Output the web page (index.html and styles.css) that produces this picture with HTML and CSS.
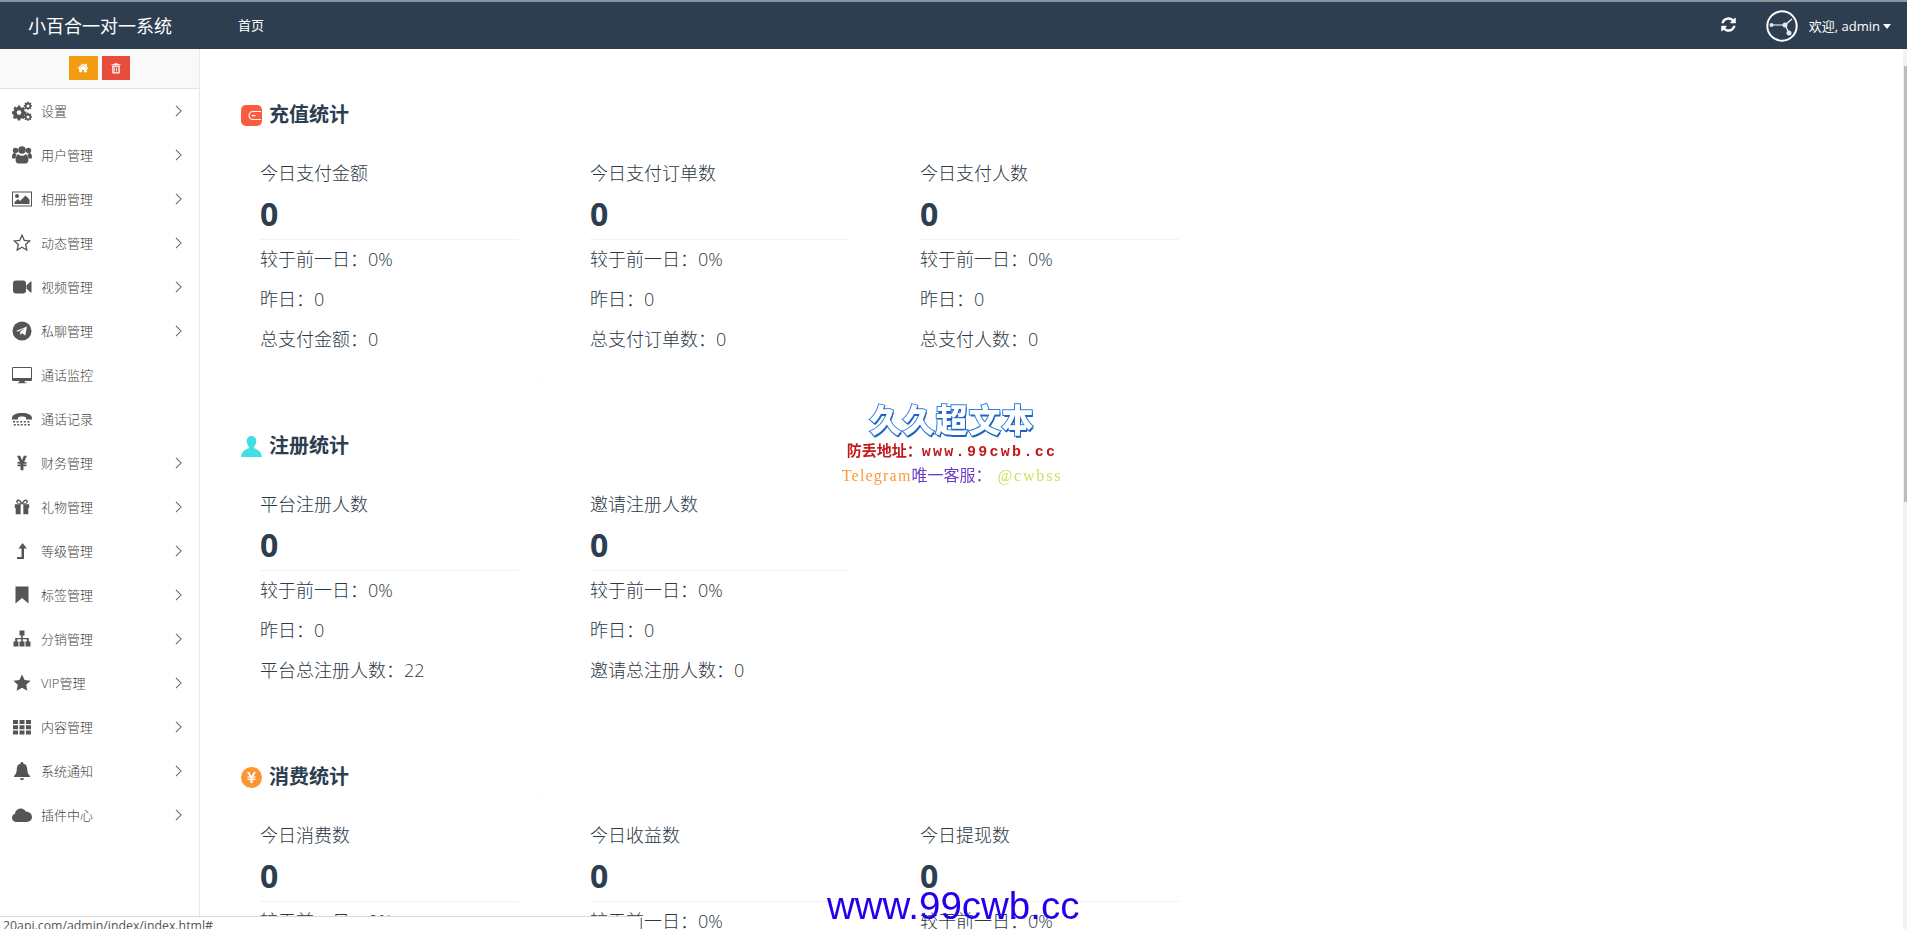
FILE: index.html
```html
<!DOCTYPE html>
<html lang="zh-CN">
<head>
  <meta charset="UTF-8" />
  <title>小百合一对一系统</title>
  <link rel="stylesheet" href="styles.css">
</head>
<body>
  <div class="topbar">
    <div class="brand">小百合一对一系统</div>
    <a class="top-link" href="#">首页</a>
    <div class="top-right">
      <svg class="refresh" viewBox="0 0 1792 1792"><path d="M1639 1056q0 5-1 7-64 268-268 434.500t-478 166.500q-146 0-282.500-55t-243.500-157l-129 129q-19 19-45 19t-45-19-19-45v-448q0-26 19-45t45-19h448q26 0 45 19t19 45-19 45l-137 137q71 66 161 102t187 36q134 0 250-65t186-179q11-17 53-117 8-23 30-23h192q13 0 22.500 9.500t9.500 22.500zm25-800v448q0 26-19 45t-45 19h-448q-26 0-45-19t-19-45 19-45l138-138q-148-137-349-137-134 0-250 65t-186 179q-11 17-53 117-8 23-30 23h-199q-13 0-22.500-9.500t-9.500-22.500v-7q65-268 270-434.500t480-166.500q146 0 284 55.500t245 156.500l130-129q19-19 45-19t45 19 19 45z"/></svg>
      <svg class="avatar" viewBox="0 0 32 32"><circle cx="16" cy="16" r="14.700" fill="none" stroke="#fff" stroke-width="2"/><path d="M5 15h14l4 8M19 15l7-6" fill="none" stroke="#fff" stroke-width="1.200"/><circle cx="5.500" cy="15" r="2" fill="#e6e9ec"/><circle cx="19" cy="15" r="2.500" fill="#e6e9ec"/><circle cx="23" cy="23" r="2.500" fill="#e6e9ec"/></svg>
      <span class="welcome">欢迎, admin</span>
      <span class="caret"></span>
    </div>
  </div>

  <div class="layout">
    <aside class="sidebar">
      <div class="side-tools">
        <span class="tool tool-home">
          <svg viewBox="0 0 1792 1792"><path d="M1472 992v480q0 26-19 45t-45 19h-384v-384h-256v384h-384q-26 0-45-19t-19-45v-480q0-1 .5-3t.5-3l575-474 575 474q1 2 1 6zm223-69l-62 74q-8 9-21 11h-3q-13 0-21-7l-692-577-692 577q-12 8-24 7-13-2-21-11l-62-74q-8-10-7-23.500t11-21.500l719-599q32-26 76-26t76 26l244 204v-195q0-14 9-23t23-9h192q14 0 23 9t9 23v408l219 182q10 8 11 21.500t-7 23.500z"/></svg>
        </span>
        <span class="tool tool-trash">
          <svg viewBox="0 0 16 16"><path d="M6 1.500h4l.6 1.500H14v1.300H2V3h3.400zM3 5h10v9a1.200 1.200 0 0 1-1.200 1.200H4.200A1.200 1.200 0 0 1 3 14zm1.800 1.400v7.400h6.400V6.400zm1 1h1v5.400h-1zm2.400 0h1v5.400h-1z"/></svg>
        </span>
      </div>
      <ul class="menu">
        <li class="menu-item">
          <svg class="mi" viewBox="0 0 20 20"><path fill-rule="evenodd" d="M5.800 4.500h2.400l.4 1.700 1.300.6 1.500-.9 1.700 1.700-.9 1.500.6 1.300 1.700.4v2.400l-1.700.4-.6 1.300.9 1.500-1.700 1.700-1.500-.9-1.300.6-.4 1.700H5.800l-.4-1.700-1.300-.6-1.500.9-1.700-1.700.9-1.500-.6-1.300L0 12.800v-2.400l1.700-.4.6-1.300-.9-1.500 1.700-1.700 1.500.9 1.300-.6zM7 9.300a2.300 2.300 0 1 0 0 4.600 2.300 2.300 0 0 0 0-4.600z"/><path fill-rule="evenodd" d="M15.500.5l1 0 .3 1.100.9.400 1-.5.7.8-.6 1 .3.800 1 .3v1.100l-1 .3-.4.800.6 1-.8.700-1-.6-.8.400-.3 1h-1l-.3-1-.9-.4-1 .6-.7-.8.500-1-.3-.8-1-.3V4.300l1-.3.400-.8-.6-1 .8-.7 1 .5.800-.4zM16 3.500a1.500 1.500 0 1 0 0 3 1.500 1.500 0 0 0 0-3z"/><path fill-rule="evenodd" d="M15.500 11.500h1l.3 1 .9.400 1-.5.7.8-.6 1 .3.800 1 .3v1.100l-1 .3-.4.800.6 1-.8.700-1-.6-.8.400-.3 1h-1l-.3-1-.9-.4-1 .6-.7-.8.500-1-.3-.8-1-.3v-1.100l1-.3.400-.8-.6-1 .8-.7 1 .5.800-.4zM16 14.500a1.500 1.500 0 1 0 0 3 1.500 1.500 0 0 0 0-3z"/></svg>
          <span class="mt">设置</span>
          <svg class="chev" viewBox="0 0 8 14"><path d="M1 1l6 6-6 6"/></svg>
        </li>
        <li class="menu-item">
          <svg class="mi" viewBox="0 0 20 20"><circle cx="3.500" cy="5.500" r="2.700"/><circle cx="16.500" cy="5.500" r="2.700"/><circle cx="10" cy="5" r="3.800"/><path d="M0 12.500c0-3 .8-4.500 2.500-4.500.8.800 1.500 1 2.300 1-.8 1-1.200 2.500-1.200 4.500H1.500c-1 0-1.500-.2-1.500-1zM20 12.500c0-3-.8-4.500-2.500-4.500-.8.800-1.500 1-2.300 1 .8 1 1.200 2.500 1.200 4.500h2.100c1 0 1.500-.2 1.500-1zM6.500 9.300c1 1 2.200 1.500 3.500 1.500s2.500-.5 3.500-1.500c1.800 0 2.900 2.400 2.900 6 0 2-1.100 3.200-2.800 3.200H6.400c-1.700 0-2.800-1.200-2.800-3.200 0-3.600 1.100-6 2.900-6z"/></svg>
          <span class="mt">用户管理</span>
          <svg class="chev" viewBox="0 0 8 14"><path d="M1 1l6 6-6 6"/></svg>
        </li>
        <li class="menu-item">
          <svg class="mi" viewBox="0 0 20 20"><path fill-rule="evenodd" d="M0 2.500h20v15H0zm1 1v13h18v-13z"/><circle cx="5" cy="7" r="2"/><path d="M2.500 15v-2l3.500-3 2 2 5.500-5.500 4 4V15z"/></svg>
          <span class="mt">相册管理</span>
          <svg class="chev" viewBox="0 0 8 14"><path d="M1 1l6 6-6 6"/></svg>
        </li>
        <li class="menu-item">
          <svg class="mi" viewBox="0 0 20 20"><path fill="none" stroke="#555" stroke-width="1.300" d="M10 2.300l2.300 5 5.400.6-4 3.700 1.100 5.400-4.800-2.700-4.800 2.700 1.100-5.400-4-3.700 5.400-.6z"/></svg>
          <span class="mt">动态管理</span>
          <svg class="chev" viewBox="0 0 8 14"><path d="M1 1l6 6-6 6"/></svg>
        </li>
        <li class="menu-item">
          <svg class="mi" viewBox="0 0 20 20"><rect x="1" y="3.500" width="13" height="13" rx="3"/><path d="M14.500 8.500l4-4h1v11h-1l-4-4z"/></svg>
          <span class="mt">视频管理</span>
          <svg class="chev" viewBox="0 0 8 14"><path d="M1 1l6 6-6 6"/></svg>
        </li>
        <li class="menu-item">
          <svg class="mi" viewBox="0 0 20 20"><circle cx="10" cy="10" r="9.500"/><path fill="#fff" d="M4 10l11-4.500-1.700 9-3.200-2.300-1.600 1.700-.4-3 4.500-4-6 3.500z"/></svg>
          <span class="mt">私聊管理</span>
          <svg class="chev" viewBox="0 0 8 14"><path d="M1 1l6 6-6 6"/></svg>
        </li>
        <li class="menu-item">
          <svg class="mi" viewBox="0 0 20 20"><path fill-rule="evenodd" d="M1.300 2h17.400c.7 0 1.300.6 1.300 1.300v11.400c0 .7-.6 1.300-1.300 1.300H12.500l.5 1.500h1.500v.7h-9v-.7H7l.5-1.500H1.300C.6 16 0 15.400 0 14.700V3.300C0 2.600.6 2 1.300 2zM1 3v10h18V3z"/></svg>
          <span class="mt">通话监控</span>
        </li>
        <li class="menu-item">
          <svg class="mi" viewBox="0 0 20 20"><path d="M0 9c0-3 4-5 10-5s10 2 10 5v1.500h-6v-2c-1-.7-2.500-1-4-1s-3 .3-4 1v2H0z"/><path d="M1 12h2v1.500H1zm3.500 0h2v1.500h-2zm3.700 0h2v1.500h-2zm3.600 0h2v1.500h-2zm3.700 0h2v1.500h-2zM1.800 15h2v1.500h-2zm3.500 0h2v1.500h-2zm3.500 0h2v1.500h-2zm3.500 0h2v1.500h-2zm3.500 0h2v1.500h-2z"/></svg>
          <span class="mt">通话记录</span>
        </li>
        <li class="menu-item">
          <svg class="mi mi-sm" viewBox="0 0 20 20"><path d="M4.500 2H8l2 5 2-5h3.500L12.400 9H15v1.700h-3.400v1.100H15v1.700h-3.400V18H8.400v-4.500H5v-1.700h3.400v-1.100H5V9h2.600z"/></svg>
          <span class="mt">财务管理</span>
          <svg class="chev" viewBox="0 0 8 14"><path d="M1 1l6 6-6 6"/></svg>
        </li>
        <li class="menu-item">
          <svg class="mi mi-sm" viewBox="0 0 20 20"><path fill-rule="evenodd" d="M2 7h5.500c-2.500-.3-4-1.500-4-3 0-1.300 1-2.200 2.300-2.200 1.800 0 3.300 1.500 4.200 3.500.9-2 2.400-3.500 4.200-3.500 1.300 0 2.300.9 2.300 2.200 0 1.500-1.500 2.700-4 3H18v4h-1v7H3v-7H2zM5.800 3.300c-.5 0-.8.300-.8.800 0 .9 1.300 1.900 3.600 1.900-.6-1.600-1.700-2.700-2.800-2.700zm8.400 0c-1.100 0-2.200 1.100-2.800 2.700 2.300 0 3.600-1 3.600-1.900 0-.5-.3-.8-.8-.8zM8.500 7v11h3V7z"/></svg>
          <span class="mt">礼物管理</span>
          <svg class="chev" viewBox="0 0 8 14"><path d="M1 1l6 6-6 6"/></svg>
        </li>
        <li class="menu-item">
          <svg class="mi" viewBox="0 0 20 20"><path d="M10.500 2l4.500 5.500h-3V18H5v-2h4.500V7.500h-3z"/></svg>
          <span class="mt">等级管理</span>
          <svg class="chev" viewBox="0 0 8 14"><path d="M1 1l6 6-6 6"/></svg>
        </li>
        <li class="menu-item">
          <svg class="mi" viewBox="0 0 20 20"><path d="M3.500 1.500h13v17L10 13l-6.500 5.500z"/></svg>
          <span class="mt">标签管理</span>
          <svg class="chev" viewBox="0 0 8 14"><path d="M1 1l6 6-6 6"/></svg>
        </li>
        <li class="menu-item">
          <svg class="mi" viewBox="0 0 20 20"><path d="M6.500 1.500h5v5H9.800V9h6v3.500h1.700v5h-5v-5h1.300v-2.200h-4v2.200h1.700v5h-5v-5h1.700v-2.200h-4v2.200h1.300v5h-5v-5h1.700V9h6V6.500H6.500z" transform="translate(1 0)"/></svg>
          <span class="mt">分销管理</span>
          <svg class="chev" viewBox="0 0 8 14"><path d="M1 1l6 6-6 6"/></svg>
        </li>
        <li class="menu-item">
          <svg class="mi" viewBox="0 0 20 20"><path d="M10 1.500l2.600 5.500 6 .7-4.400 4.100 1.200 6L10 14.800l-5.400 3 1.200-6-4.400-4.100 6-.7z"/></svg>
          <span class="mt">VIP管理</span>
          <svg class="chev" viewBox="0 0 8 14"><path d="M1 1l6 6-6 6"/></svg>
        </li>
        <li class="menu-item">
          <svg class="mi" viewBox="0 0 20 20"><path d="M1 3h5v4H1zm6.500 0h5v4h-5zm6.500 0h5v4h-5zM1 8.300h5v4H1zm6.500 0h5v4h-5zm6.500 0h5v4h-5zM1 13.600h5v4H1zm6.500 0h5v4h-5zm6.500 0h5v4h-5z"/></svg>
          <span class="mt">内容管理</span>
          <svg class="chev" viewBox="0 0 8 14"><path d="M1 1l6 6-6 6"/></svg>
        </li>
        <li class="menu-item">
          <svg class="mi" viewBox="0 0 20 20"><path d="M10 1a1.300 1.300 0 0 1 1.300 1.500c2.500.6 3.900 2.600 3.900 5.300 0 4 1.200 5.700 2.800 7.200v1H2v-1c1.600-1.500 2.800-3.200 2.800-7.200 0-2.700 1.400-4.700 3.900-5.300A1.300 1.300 0 0 1 10 1zM8 17.200h4a2 2 0 0 1-4 0z"/></svg>
          <span class="mt">系统通知</span>
          <svg class="chev" viewBox="0 0 8 14"><path d="M1 1l6 6-6 6"/></svg>
        </li>
        <li class="menu-item">
          <svg class="mi" viewBox="0 0 20 20"><path d="M4.500 17C2 17 0 15.200 0 12.800c0-1.900 1.200-3.500 3-4 .3-3 2.800-5.300 5.800-5.300 2.300 0 4.300 1.300 5.200 3.300 3.300-.3 6 2.200 6 5.300 0 2.800-2.200 4.900-5 4.900z"/></svg>
          <span class="mt">插件中心</span>
          <svg class="chev" viewBox="0 0 8 14"><path d="M1 1l6 6-6 6"/></svg>
        </li>
      </ul>
    </aside>

    <main class="content">
      <section class="stat-group">
        <h3 class="group-title">
          <svg class="gi" viewBox="0 0 21 21"><rect width="21" height="21" rx="5" fill="#fb5b3f"/><path d="M20 6.500h-8a4 4 0 0 0 0 8h8" fill="none" stroke="#fff" stroke-width="1.200"/><rect x="10.500" y="10" width="4" height="1.200" fill="#fff"/></svg>
          充值统计
        </h3>
        <div class="cards">
          <div class="card">
            <div class="card-name">今日支付金额</div>
            <div class="card-num">0</div>
            <div class="card-row">较于前一日：0%</div>
            <div class="card-row">昨日：0</div>
            <div class="card-row">总支付金额：0</div>
          </div>
          <div class="card">
            <div class="card-name">今日支付订单数</div>
            <div class="card-num">0</div>
            <div class="card-row">较于前一日：0%</div>
            <div class="card-row">昨日：0</div>
            <div class="card-row">总支付订单数：0</div>
          </div>
          <div class="card">
            <div class="card-name">今日支付人数</div>
            <div class="card-num">0</div>
            <div class="card-row">较于前一日：0%</div>
            <div class="card-row">昨日：0</div>
            <div class="card-row">总支付人数：0</div>
          </div>
        </div>
      </section>

      <section class="stat-group">
        <h3 class="group-title">
          <svg class="gi" viewBox="0 0 21 21"><path fill="#40dfe3" d="M10.500 0c3 0 4.800 2.200 4.800 5.200 0 2.200-.9 4-2.100 5.300v1.700c3.200 1.100 7 2.800 7.800 8.800H0c.8-6 4.600-7.700 7.800-8.800v-1.700C6.600 9.200 5.700 7.400 5.700 5.200 5.700 2.200 7.500 0 10.500 0z"/></svg>
          注册统计
        </h3>
        <div class="cards">
          <div class="card">
            <div class="card-name">平台注册人数</div>
            <div class="card-num">0</div>
            <div class="card-row">较于前一日：0%</div>
            <div class="card-row">昨日：0</div>
            <div class="card-row">平台总注册人数：22</div>
          </div>
          <div class="card">
            <div class="card-name">邀请注册人数</div>
            <div class="card-num">0</div>
            <div class="card-row">较于前一日：0%</div>
            <div class="card-row">昨日：0</div>
            <div class="card-row">邀请总注册人数：0</div>
          </div>
        </div>
      </section>

      <section class="stat-group">
        <h3 class="group-title">
          <svg class="gi" viewBox="0 0 21 21"><circle cx="10.500" cy="10.500" r="10.500" fill="#fb9630"/><path fill="#fff" d="M6 5h2.300l2.200 3.900L12.700 5H15l-2.600 4.500h2.100v1.200h-3v1h3v1.200h-3V16h-2v-3.100h-3v-1.200h3v-1h-3V9.500h2.100z"/></svg>
          消费统计
        </h3>
        <div class="cards">
          <div class="card">
            <div class="card-name">今日消费数</div>
            <div class="card-num">0</div>
            <div class="card-row">较于前一日：0%</div>
          </div>
          <div class="card">
            <div class="card-name">今日收益数</div>
            <div class="card-num">0</div>
            <div class="card-row">较于前一日：0%</div>
          </div>
          <div class="card">
            <div class="card-name">今日提现数</div>
            <div class="card-num">0</div>
            <div class="card-row">较于前一日：0%</div>
          </div>
        </div>
      </section>
    </main>

    <div class="scrollbar"><div class="scroll-thumb"></div></div>
  </div>

  <!-- watermark over the page -->
  <div class="stamp">
    <div class="stamp-logo">久久超文本</div>
    <div class="stamp-addr">防丢地址：<span class="addr-url">www.99cwb.cc</span></div>
    <div class="stamp-tg"><span class="tg-a">Telegram</span><span class="tg-b">唯一客服：</span><span class="tg-c">@cwbss</span></div>
  </div>
  <div class="big-url">www.99cwb.cc</div>
  <div class="status-bar">20api.com/admin/index/index.html#</div>
</body>
</html>
```

FILE: styles.css
```css
* {
  box-sizing: border-box;
}

html, body {
  height: 100%;
}

body {
  margin: 0;
  overflow: hidden;
  background: #fff;
  color: #2c3e50;
  font-family: "Open Sans", "Noto Sans CJK SC", sans-serif;
  display: flex;
  flex-direction: column;
}

/* top bar */
.topbar {
  height: 49px;
  flex: none;
  display: flex;
  align-items: center;
  background: #2c3e50;
  border-top: 2px solid #8a939c;
  color: #fff;
}

.brand {
  width: 238px;
  padding-left: 28px;
  margin-bottom: 2px;
  font-size: 18px;
  font-weight: 400;
  white-space: nowrap;
}

.top-link {
  margin-bottom: 2px;
  color: #fff;
  font-size: 13px;
  font-weight: 400;
  text-decoration: none;
}

.top-right {
  margin-left: auto;
  display: flex;
  align-items: center;
  padding-right: 16px;
}

.refresh {
  width: 17px;
  height: 17px;
  fill: #fff;
  margin-right: 29px;
  margin-bottom: 2px;
}

.avatar {
  width: 32px;
  height: 32px;
  margin-right: 11px;
}

.welcome {
  font-size: 13px;
}

.caret {
  margin: 2px 0 0 3px;
  border-top: 5px solid #fff;
  border-left: 4px solid transparent;
  border-right: 4px solid transparent;
}

.layout {
  flex: 1;
  display: flex;
  min-height: 0;
}

/* sidebar */
.sidebar {
  width: 200px;
  flex: none;
  border-right: 1px solid #e8e8e8;
  background: #fff;
}

.side-tools {
  height: 40px;
  display: flex;
  justify-content: center;
  align-items: flex-start;
  gap: 4px;
  padding-top: 7px;
  padding-right: 1px;
  background: #f9f9f9;
  border-bottom: 1px solid #e2e2e2;
}

.tool {
  height: 24px;
  display: flex;
  align-items: center;
  justify-content: center;
}

.tool svg {
  width: 12px;
  height: 12px;
  fill: #fff;
}

.tool-home {
  width: 29px;
  background: #f39c12;
}

.tool-trash {
  width: 28px;
  background: #e74c3c;
}

.menu {
  list-style: none;
  margin: 0;
  padding: 0;
}

.menu-item {
  height: 44px;
  display: flex;
  align-items: center;
  padding: 0 17px 0 12px;
  font-size: 13px;
  font-weight: 300;
  color: #444;
}

.mi {
  width: 20px;
  height: 20px;
  flex: none;
  fill: #555;
  margin-right: 9px;
}

.mi-sm {
  width: 18px;
  height: 18px;
  margin-left: 1px;
  margin-right: 10px;
}

.mt {
  flex: 1;
  margin-bottom: 2px;
}

.chev {
  width: 7px;
  height: 12px;
  fill: none;
  stroke: #666;
  stroke-width: 1.200;
}

/* stat cards */
.content {
  flex: 1;
  min-width: 0;
  overflow: hidden;
  padding: 51px 0 0 37px;
}

.stat-group {
  height: 331px;
}

.group-title {
  margin: 0 0 3px;
  height: 30px;
  display: flex;
  align-items: center;
  gap: 7px;
  padding-left: 4px;
  font-size: 20px;
  font-weight: 700;
  line-height: 30px;
  color: #2c3e50;
}

.gi {
  width: 21px;
  height: 21px;
  flex: none;
}

.cards {
  display: flex;
  gap: 25px;
}

.card {
  width: 305px;
  height: 250px;
  padding: 25px 23px 0;
  background: #fff;
  box-shadow: 0 0 4px rgba(0, 0, 0, 0.025);
}

.card-name {
  font-size: 18px;
  font-weight: 300;
  line-height: 30px;
  color: #2c3845;
}

.card-num {
  height: 52px;
  border-bottom: 1px solid #f2f2f2;
  font-family: "Open Sans", sans-serif;
  font-size: 32px;
  font-weight: 700;
  line-height: 52px;
  color: #2c3e50;
}

.card-row {
  height: 40px;
  font-size: 18px;
  font-weight: 300;
  line-height: 38px;
  color: #2c3845;
}

/* fake browser scrollbar */
.scrollbar {
  width: 4px;
  flex: none;
  background: #f3f3f3;
}

.scroll-thumb {
  height: 436px;
  margin-top: 17px;
  margin-left: 1px;
  background: #bdbdbd;
}

/* watermark */
.stamp {
  position: fixed;
  left: 832px;
  top: 396px;
  width: 240px;
  text-align: center;
}

.stamp-logo {
  font-family: "Noto Sans CJK SC", sans-serif;
  font-size: 32px;
  font-weight: 900;
  line-height: 44px;
  letter-spacing: 1px;
  color: #fff;
  -webkit-text-stroke: 2px #2f7fe0;
  paint-order: stroke fill;
  text-shadow: 1px 2px 0 #1c63c4;
}

.stamp-addr {
  margin-top: -1px;
  font-family: "Noto Sans CJK SC", sans-serif;
  font-size: 15px;
  font-weight: 700;
  line-height: 22px;
  color: #c01a1a;
  white-space: nowrap;
}

.addr-url {
  font-family: "Liberation Mono", monospace;
  letter-spacing: 2.300px;
}

.stamp-tg {
  font-family: "Liberation Serif", "Noto Sans CJK SC", serif;
  font-size: 16px;
  line-height: 24px;
  white-space: nowrap;
}

.tg-a {
  color: #ff9a3c;
  letter-spacing: 1.200px;
}

.tg-b {
  color: #6a3fc8;
  margin-right: 6px;
}

.tg-c {
  color: #cfe05a;
  letter-spacing: 1.800px;
}

.big-url {
  position: fixed;
  z-index: 2;
  left: 827px;
  top: 884px;
  font-family: "Liberation Sans", sans-serif;
  font-size: 38.500px;
  line-height: 44px;
  color: #2200ee;
  white-space: nowrap;
}

.status-bar {
  position: fixed;
  left: 0;
  bottom: 0;
  width: 640px;
  height: 13px;
  padding-left: 3px;
  overflow: hidden;
  background: #fff;
  border-top: 1px solid #d9d9d9;
  font-size: 12.300px;
  line-height: 17px;
  color: #555;
}
```
